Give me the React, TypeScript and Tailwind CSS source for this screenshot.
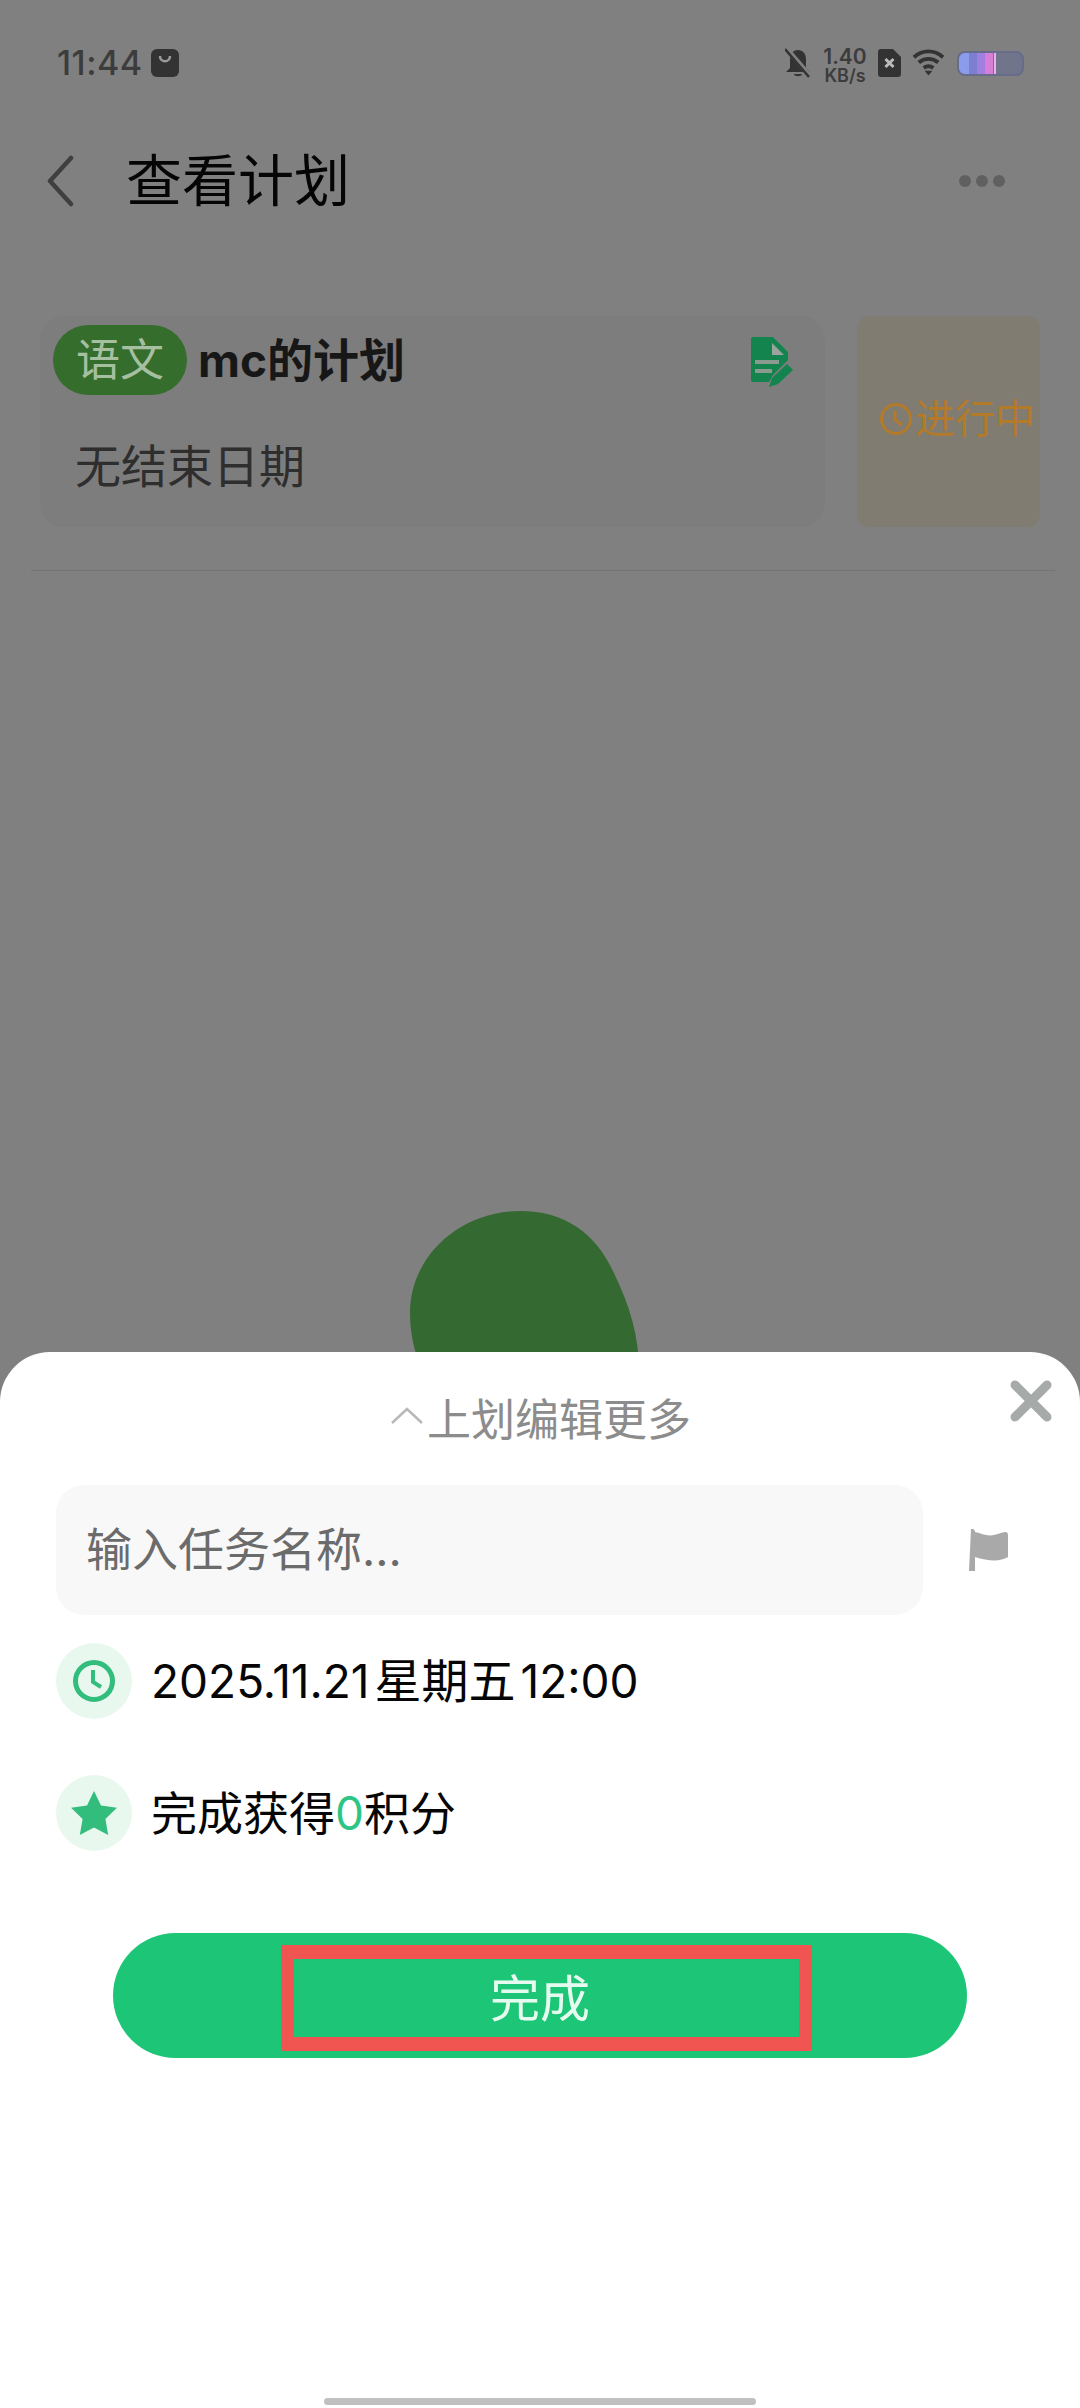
const cjk = "font-['Inter','Noto_Sans_CJK_SC',sans-serif]";

const StatusBar = () => (
    <div className="flex h-[34px] items-center justify-between pl-[57px] pr-[56px] mt-[46px]">
        <div className="flex items-center gap-[8px]">
            <span className="text-[34px] leading-[34px] font-medium text-[#3c3c3c] tracking-[0.5px]">11:44</span>
            <svg width="28" height="28" viewBox="0 0 28 28">
                <rect width="28" height="28" rx="6" fill="#333" />
                <path d="M9 7c0 7 10 7 10 0" fill="none" stroke="#9a9a9a" strokeWidth="2.500" />
            </svg>
        </div>
        <div className="flex items-center">
            <svg width="26" height="30" viewBox="1 2 26 30">
                <path d="M14 4c5 0 8 4 8 9v9l4 4H2l4-4v-9c0-5 3-9 8-9zM10 28h8c0 3-8 3-8 0z" fill="#333" />
                <path d="M1 1l26 30" stroke="#808080" strokeWidth="5" />
                <path d="M1 3l24 28" stroke="#333" strokeWidth="2.500" />
            </svg>
            <div className="ml-[12px] mt-[5px] flex w-[44px] flex-col items-center font-semibold text-[#3c3c3c]">
                <span className="text-[21px] leading-[20px]">1.40</span>
                <span className="text-[18px] leading-[18px]">KB/s</span>
            </div>
            <svg className="ml-[11px]" width="23" height="28" viewBox="0 0 23 28">
                <path d="M3 0h12l8 8v17a3 3 0 0 1-3 3H3a3 3 0 0 1-3-3V3a3 3 0 0 1 3-3z" fill="#333" />
                <path d="M7.500 10l8 8M15.500 10l-8 8" stroke="#bbb" strokeWidth="3" />
            </svg>
            <svg className="ml-[11px]" width="33" height="28" viewBox="0 0 34 28" fill="none" stroke="#333">
                <path d="M2 8c9-8 21-8 30 0" strokeWidth="4" />
                <path d="M7 13.500c6-5 14-5 20 0" strokeWidth="4" />
                <path d="M12 19c3-2 7-2 10 0" strokeWidth="4" />
                <path d="M13 22h8l-4 5z" fill="#333" stroke="none" />
            </svg>
            <div className="ml-[12px] flex h-[25px] w-[67px] overflow-hidden rounded-[8px] border-2 border-[#666c8a] bg-[#71758c]">
                <div className="h-full w-[10px] bg-[#8b9cec]" />
                <div className="h-full w-[8px] bg-[#7c7fd0]" />
                <div className="h-full w-[8px] bg-[#a07fe0]" />
                <div className="h-full w-[8px] bg-[#d77fd8]" />
                <div className="ml-[1px] h-full w-[2px] bg-[#e8b0e8]" />
            </div>
        </div>
    </div>
);

const Header = () => (
    <div className="mt-[66px] flex h-[70px] items-center justify-between pl-[46px] pr-[75px]">
        <div className="flex items-center">
            <svg width="28" height="52" viewBox="0 0 28 52" fill="none">
                <path d="M25 3L4 26l21 23" stroke="#3f3f3f" strokeWidth="4.500" strokeLinecap="round" strokeLinejoin="round" />
            </svg>
            <span className="ml-[52px] text-[56px] leading-[70px] text-[#050505]">查看计划</span>
        </div>
        <div className="flex gap-[5px]">
            <span className="size-[12px] rounded-full bg-[#606060]" />
            <span className="size-[12px] rounded-full bg-[#606060]" />
            <span className="size-[12px] rounded-full bg-[#606060]" />
        </div>
    </div>
);

const PlanCard = () => (
    <div className="mt-[100px] flex h-[211px] pl-[40px] pr-[40px]">
        <div className="flex w-[785px] flex-col rounded-[24px] bg-[#7d7d7d] pl-[13px] pr-[30px] pt-[9px]">
            <div className="flex items-center">
                <span className="flex h-[70px] w-[134px] items-center justify-center rounded-full bg-[#356d2c] text-[44px] leading-none text-[#a6bfa1]">
                    语文
                </span>
                <span className="ml-[11px] text-[46px] leading-[70px] font-bold text-[#171717]">mc的计划</span>
                <svg className="ml-auto mr-[2px] mt-[3px]" width="42" height="50" viewBox="0 0 42 50">
                    <path d="M2 0h20l15 15v8L22 38l-4 7H2a2 2 0 0 1-2-2V2a2 2 0 0 1 2-2z" fill="#14844f" />
                    <path d="M21 6l12 12H21z" fill="#9aa39c" />
                    <path d="M4 25h24M4 34h17" stroke="#8a9a90" strokeWidth="4" />
                    <path d="M18 50l3-9 15-14 6 6-15 14z" fill="#14844f" />
                </svg>
            </div>
            <span className="ml-[22px] mt-[45px] text-[46px] leading-[52px] text-[#2e2e2e]">无结束日期</span>
        </div>
        <div className="ml-[32px] flex w-[183px] items-center rounded-[12px] bg-[#807c71] pl-[22px] pb-[5px]">
            <svg width="34" height="34" viewBox="0 0 34 34" fill="none" stroke="#b37a2a" strokeWidth="3">
                <circle cx="17" cy="17" r="14.500" />
                <path d="M16 9v9l7 5" />
            </svg>
            <span className="ml-[2px] whitespace-nowrap text-[40px] leading-none text-[#b37a2a]">进行中</span>
        </div>
    </div>
);

const Sheet = () => (
    <div className="absolute inset-x-0 bottom-0 flex h-[1056px] flex-col rounded-t-[50px] bg-white">
        <div className="relative mt-[45px] flex h-[46px] items-center justify-center">
            <svg width="32" height="18" viewBox="0 0 32 18" fill="none" className="mt-[-8px] mr-[4px] ml-[2px]">
                <path d="M1 16L16 2l15 14" stroke="#b8b8b8" strokeWidth="2.500" />
            </svg>
            <span className="text-[44px] leading-[46px] text-[#8c8c8c]">上划编辑更多</span>
            <svg className="absolute right-[28px] top-[-17px]" width="42" height="42" viewBox="0 0 42 42" fill="none">
                <path d="M5 5l32 32M37 5L5 37" stroke="#a6aaa9" strokeWidth="9" strokeLinecap="round" />
            </svg>
        </div>
        <div className="mt-[42px] flex items-center pl-[56px]">
            <div className="flex h-[130px] w-[867px] items-center rounded-[28px] bg-[#f8f8f8] pb-[2px] pl-[30px] text-[46px] text-[#6b6b6b]">
                输入任务名称...
            </div>
            <svg className="ml-[45px]" width="42" height="42" viewBox="0 0 42 42">
                <path d="M3 0a3 3 0 0 1 4 3c9 2 13 6 26 1 5-2 7-1 7 2v22c-8 5-20 4-33 0v14H1z" fill="#a9a9a9" />
            </svg>
        </div>
        <div className="mt-[28px] flex items-center pl-[56px]">
            <div className="flex size-[76px] items-center justify-center rounded-full bg-[#e9f8ef]">
                <svg width="44" height="44" viewBox="0 0 44 44" fill="none" stroke="#33bd7d" strokeWidth="5">
                    <circle cx="22" cy="22" r="18.500" />
                    <path d="M21 11v12l8 5" strokeWidth="4" />
                </svg>
            </div>
            <span className="ml-[19px] text-[46px] leading-[76px] text-[#060606]">
                2025.11.21<span className="mx-[5px] text-[47px]">星期五</span>12:00
            </span>
        </div>
        <div className="mt-[56px] flex items-center pl-[56px]">
            <div className="flex size-[76px] items-center justify-center rounded-full bg-[#e9f8ef]">
                <svg width="48" height="46" viewBox="0 0 24 23" fill="#33bd7d">
                    <path d="M12 0.500l3.500 7.300 8 1.100-5.800 5.600 1.400 8-7.100-3.800-7.100 3.800 1.400-8L0.500 8.900l8-1.100z" />
                </svg>
            </div>
            <span className="ml-[19px] text-[46px] leading-[76px] text-[#060606]">
                完成获得<span className="text-[#2dc585]">0</span>积分
            </span>
        </div>
        <div className="ml-[113px] mt-[82px] flex h-[125px] w-[854px] items-center justify-center rounded-full bg-[#1dc676]">
            <div className="ml-[13px] mt-[5px] flex h-[106px] w-[531px] items-center justify-center border-x-[13px] border-y-[14px] border-[#f05552] pr-[13px] pt-[2px] text-[50px] leading-none text-[#e6fbef]">
                完成
            </div>
        </div>
        <div className="mx-auto mb-[3px] mt-auto h-[7px] w-[432px] rounded-full bg-[#c0c0c0]" />
    </div>
);

const App = () => {
    return (
        <div className={`relative flex h-[2408px] w-[1080px] flex-col overflow-hidden bg-[#808080] ${cjk}`}>
            <StatusBar />
            <Header />
            <PlanCard />
            <div className="ml-[31px] mt-[43px] h-[1px] w-[1024px] bg-[#747474]" />
            <svg className="absolute left-[410px] top-[1211px]" width="229" height="160" viewBox="0 0 229 160">
                <path d="M110 0C155 0 185 22 203 60C220 95 229 125 229 160H12C4 140 0 122 0 102C0 45 50 0 110 0z" fill="#356932" />
            </svg>
            <Sheet />
        </div>
    );
};

export default App;
